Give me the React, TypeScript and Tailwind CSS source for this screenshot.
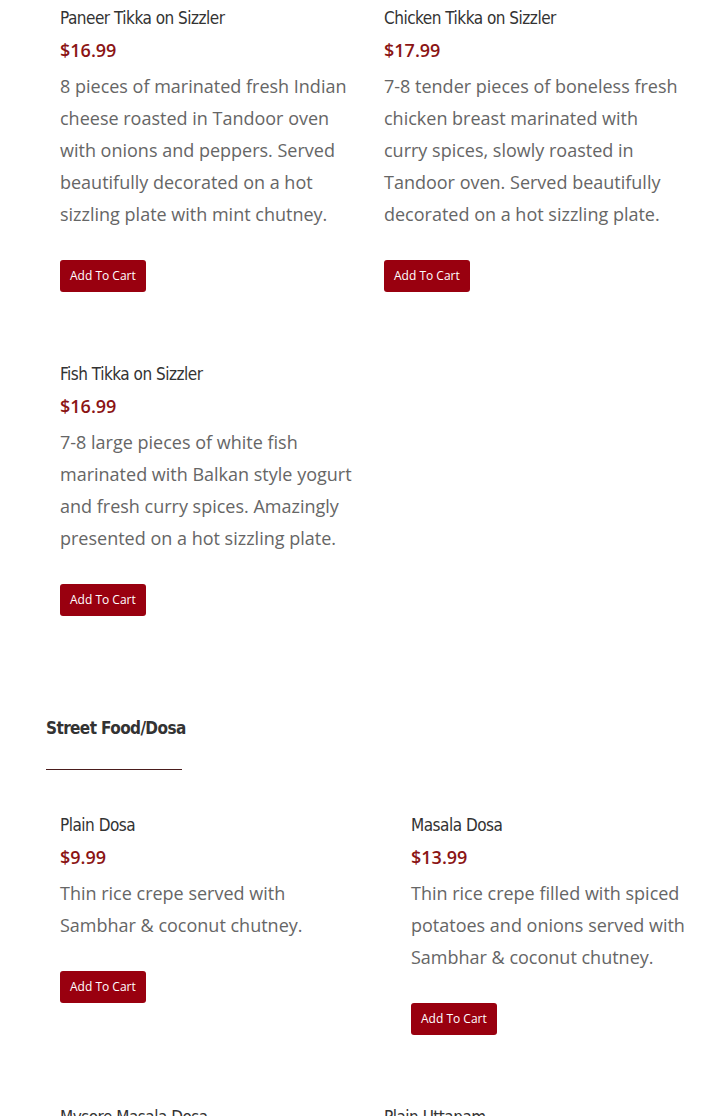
type Item = { name: string; price: string; desc: string; shift?: boolean };

const sizzlers: Item[] = [
  {
    name: 'Paneer Tikka on Sizzler',
    price: '$16.99',
    desc: '8 pieces of marinated fresh Indian cheese roasted in Tandoor oven with onions and peppers. Served beautifully decorated on a hot sizzling plate with mint chutney.',
  },
  {
    name: 'Chicken Tikka on Sizzler',
    price: '$17.99',
    desc: '7-8 tender pieces of boneless fresh chicken breast marinated with curry spices, slowly roasted in Tandoor oven. Served beautifully decorated on a hot sizzling plate.',
  },
  {
    name: 'Fish Tikka on Sizzler',
    price: '$16.99',
    desc: '7-8 large pieces of white fish marinated with Balkan style yogurt and fresh curry spices. Amazingly presented on a hot sizzling plate.',
  },
];

const dosas: Item[] = [
  { name: 'Plain Dosa', price: '$9.99', desc: 'Thin rice crepe served with Sambhar & coconut chutney.' },
  {
    name: 'Masala Dosa',
    price: '$13.99',
    desc: 'Thin rice crepe filled with spiced potatoes and onions served with Sambhar & coconut chutney.',
    shift: true,
  },
  { name: 'Mysore Masala Dosa', price: '$13.99', desc: 'Thin rice crepe with spicy chutney.' },
  { name: 'Plain Uttapam', price: '$11.99', desc: 'Thick rice pancake.' },
];

const titleFont = { fontFamily: '"DejaVu Sans Condensed", "DejaVu Sans", sans-serif' };

function MenuItem({ item }: { item: Item }) {
  return (
    <div className={`flex flex-col items-start pb-[64px] ${item.shift ? 'ml-[27px] w-[292px]' : ''}`}>
      <div
        className="h-[36px] text-[17px] leading-[36px] tracking-[-0.5px] text-[#333] [font-stretch:condensed]"
        style={titleFont}
      >
        {item.name}
      </div>
      <div className="text-[18px] font-semibold leading-[28px] text-[#8b1414]">{item.price}</div>
      <p className="mt-[6px] text-[18px] leading-[32px] text-[#666]">{item.desc}</p>
      <button className="mt-[30px] h-[32px] rounded-[3px] bg-[#99000f] px-[10px] text-[12px] text-white">
        Add To Cart
      </button>
    </div>
  );
}

export default function App() {
  return (
    <div className="h-[1116px] overflow-hidden bg-white" style={{ fontFamily: '"Open Sans", sans-serif' }}>
      <div className="grid grid-cols-[300px_300px] gap-x-[24px] pl-[60px]">
        {sizzlers.map((it) => (
          <MenuItem key={it.name} item={it} />
        ))}
      </div>

      <div className="pl-[46px] pt-[32px]">
        <h2
          className="text-[17px] font-bold leading-[32px] tracking-[-0.6px] text-[#333] [font-stretch:condensed]"
          style={titleFont}
        >
          Street Food/Dosa
        </h2>
        <div className="mt-[25px] h-px w-[136px] bg-[#4a1d1d]" />
      </div>

      <div className="grid grid-cols-[300px_300px] gap-x-[24px] pl-[60px] pt-[37px]">
        {dosas.map((it) => (
          <MenuItem key={it.name} item={it} />
        ))}
      </div>
    </div>
  );
}
